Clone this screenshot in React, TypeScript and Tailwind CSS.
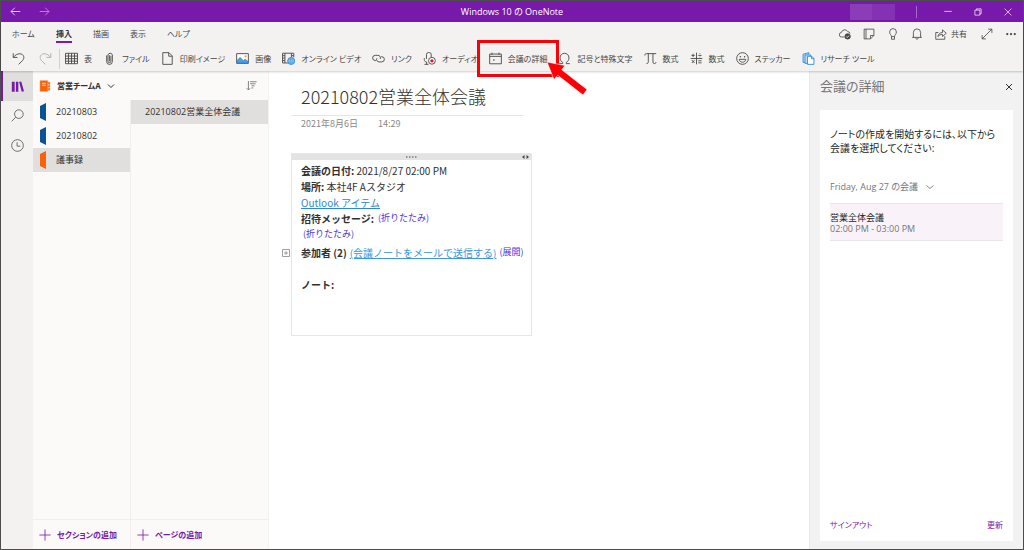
import type { ReactNode } from "react";

type IconProps = { children: ReactNode; className?: string; box?: string };

function Icon({ children, className = "size-[13px]", box = "0 0 16 16" }: IconProps) {
  return (
    <svg
      className={`shrink-0 ${className}`}
      viewBox={box}
      fill="none"
      stroke="currentColor"
      strokeWidth={1.1}
      aria-hidden="true"
    >
      {children}
    </svg>
  );
}

const tabs = ["ホーム", "挿入", "描画", "表示", "ヘルプ"];

const tools: { label: string; icon: ReactNode; highlight?: boolean }[] = [
  {
    label: "表",
    icon: (
      <Icon>
        <path d="M.6 1.6h14.8v12.8H.6zM.6 5h14.8M.6 8.2h14.8M.6 11.3h14.8M4.3 1.6v12.8M8 1.6v12.8M11.7 1.6v12.8" />
      </Icon>
    ),
  },
  {
    label: "ファイル",
    icon: (
      <Icon>
        <path d="M4.5 4.2v7.6a3.5 3.5 0 0 0 7 0V3.6a2.8 2.8 0 0 0-5.4 0v7.8a1.7 1.7 0 0 0 3.6 0V4.6" />
        <path d="M7.9 4v7.5" />
      </Icon>
    ),
  },
  {
    label: "印刷イメージ",
    icon: (
      <Icon>
        <path d="M2.2.8h7.6l4 4v10.4H2.2zM9.5.8v4.4h4.3" />
      </Icon>
    ),
  },
  {
    label: "画像",
    icon: (
      <Icon>
        <path d="M.8 2h14.4v12H.8z" fill="#fff" />
        <path d="M1.3 10.5 5 6.8l4 4 2.3-2 3.4 3v1.7H1.3z" fill="#4ba0e1" stroke="#2b7cd3" strokeWidth="1" />
        <circle cx="11.8" cy="5.2" r="1.3" fill="#f29b3a" stroke="none" />
      </Icon>
    ),
  },
  {
    label: "オンライン ビデオ",
    icon: (
      <Icon>
        <path d="M7.5 13.5H.7v-12h13.8v5M3.6 1.5v12M11.6 1.5v5M.7 4.5h2.9M.7 7.5h2.9M.7 10.5h2.9M11.6 4.5h2.9" />
        <circle cx="11.3" cy="11" r="4.3" fill="#4ba0e1" stroke="#2b88d8" />
        <path d="M7.2 11h8.2M11.3 7v8M9.4 7.8c-.9 2-.9 4.4 0 6.4M13.2 7.8c.9 2 .9 4.4 0 6.4" stroke="#b8dcf7" strokeWidth=".6" />
      </Icon>
    ),
  },
  {
    label: "リンク",
    icon: (
      <Icon>
        <path d="M5.2 10.5H4a3.2 3.2 0 0 1 0-6.400h3.200a3.200 3.200 0 0 1 2.900 4.500" />
        <path d="M10.800 5.800H12a3.200 3.200 0 0 1 0 6.400H8.800a3.200 3.200 0 0 1-2.900-4.500" />
      </Icon>
    ),
  },
  {
    label: "オーディオ",
    icon: (
      <Icon>
        <path d="M4.300 8.500V3a2.300 2.300 0 0 1 2.300-2.300h1.200A2.300 2.300 0 0 1 10.100 3v3.200M1.600 7.500v1.800c0 1.800 1.200 3 3 3.200M4.500 12.400v2.700M1.800 15.200h5" />
        <circle cx="11" cy="10.800" r="4.200" fill="#fff" />
        <circle cx="11" cy="10.800" r="2" fill="#e81123" stroke="none" />
      </Icon>
    ),
  },
  {
    label: "会議の詳細",
    highlight: true,
    icon: (
      <Icon>
        <path d="M.8 2.500h14.400v12H.8zM.8 5.400h14.400M3.700.8v2.800M12.300.8v2.800" />
        <circle cx="6" cy="9.800" r="1" fill="currentColor" stroke="none" />
      </Icon>
    ),
  },
  {
    label: "記号と特殊文字",
    icon: (
      <Icon>
        <path d="M1.500 14.300h4.300v-1.500C3.800 11.600 2.500 9.700 2.500 7.200 2.500 3.900 4.900 1.600 8 1.600s5.500 2.300 5.500 5.600c0 2.500-1.300 4.400-3.300 5.600v1.500h4.300" />
      </Icon>
    ),
  },
  {
    label: "数式",
    icon: (
      <Icon>
        <path d="M1 4.300c0-1.500.6-2.300 2-2.300h12M5.300 2v10c0 1.500-.8 2.300-2.300 2.300M11 2v10.500c0 1.200.7 1.800 1.800 1.800s1.900-.6 1.900-1.800" />
      </Icon>
    ),
  },
  {
    label: "数式",
    icon: (
      <Icon>
        <path d="M8 .8v14.400M.8 8h14.400M1.800 4.200h4M3.800 2.200v4M10.200 4.200h4M2.300 10l3.200 3.500M5.500 10l-3.200 3.500M10.200 10.800h4M10.200 13.300h4M12.200 1.700v.8M12.200 5.800v.8" />
      </Icon>
    ),
  },
  {
    label: "ステッカー",
    icon: (
      <Icon>
        <circle cx="8" cy="8" r="7.2" />
        <path d="M4 9h8c-.3 2.300-1.800 3.500-4 3.500S4.300 11.300 4 9z" />
        <circle cx="5.4" cy="5.8" r=".9" fill="currentColor" stroke="none" />
        <circle cx="10.6" cy="5.8" r=".9" fill="currentColor" stroke="none" />
      </Icon>
    ),
  },
  {
    label: "リサーチ ツール",
    icon: (
      <Icon>
        <g stroke="#2b88d8">
          <path d="M5 12.800H1.300V2.800L8.500.8v1.800" fill="#c7e0f4" />
          <path d="M6.800 14H3.700V3.600h7v1.600" fill="#c7e0f4" />
          <path d="M6.700 5.300h5.300l2.700 2.700v7.200h-8z" fill="#fff" />
          <path d="M11.800 5.300v2.900h2.900" />
        </g>
      </Icon>
    ),
  },
];

const sections = [
  { name: "20210803", color: "text-[#0b5394]", selected: false },
  { name: "20210802", color: "text-[#0b5394]", selected: false },
  { name: "議事録", color: "text-[#f7630c]", selected: true },
];

function TitleBar() {
  return (
    <header className="grid h-[21px] grid-cols-3 items-center bg-[#7719aa] text-white">
      <div className="flex items-center gap-[18px] pl-[9px]">
        <button type="button" aria-label="戻る">
          <Icon className="size-[11px]"><path d="M15 8H1.500M7 2.500 1.500 8 7 13.500" /></Icon>
        </button>
        <button type="button" aria-label="進む" className="opacity-60">
          <Icon className="size-[11px]"><path d="M1 8h13.500M9 2.500 14.500 8 9 13.500" /></Icon>
        </button>
      </div>
      <h1 className="text-center text-[9px]">Windows 10 の OneNote</h1>
      <div className="flex items-center justify-end">
        <div className="mr-[21px] flex h-4 w-[45px]">
          <span className="flex-1 bg-[#8b3db8]" />
          <span className="flex-1 bg-[#8431b3]" />
        </div>
        <span className="mr-[26px] h-3 w-px bg-[#a56bc6]" />
        <div className="flex items-center gap-5 pr-2.5">
          <button type="button" aria-label="最小化">
            <Icon className="size-2.5"><path d="M2 7h12" /></Icon>
          </button>
          <button type="button" aria-label="元のサイズに戻す">
            <Icon className="size-2.5"><path d="M3 5h8v8H3zM5.500 5V3H13v8h-2" /></Icon>
          </button>
          <button type="button" aria-label="閉じる">
            <Icon className="size-2.5"><path d="m2.500 2.500 11 11M13.500 2.500l-11 11" /></Icon>
          </button>
        </div>
      </div>
    </header>
  );
}

function Ribbon() {
  return (
    <div className="relative z-10 bg-[#f3f2f1] shadow-[0_1px_2px_rgba(0,0,0,0.2)]">
      <div className="flex h-6 items-center justify-between pr-1.5 pl-[11px]">
        <nav className="flex gap-[21px] text-[8px]">
          {tabs.map((tab) => (
            <a
              key={tab}
              href="#"
              className={
                tab === "挿入"
                  ? "border-b-2 border-[#7719aa] pt-0.5 leading-[14px] font-bold text-[#3b3a39]"
                  : "border-b-2 border-transparent pt-0.5 leading-[14px]"
              }
            >
              {tab}
            </a>
          ))}
        </nav>
        <div className="flex items-center gap-3">
          <button type="button" aria-label="同期">
            <Icon className="size-3">
              <path d="M7.500 12H3.600a3 3 0 0 1-.4-6A4.500 4.500 0 0 1 11.500 4.700a3 3 0 0 1 3 2.800" />
              <circle cx="11.500" cy="11.200" r="3.600" fill="#484644" />
              <path d="m9.800 11.300 1.300 1.300 2.200-2.500" stroke="#fff" />
            </Icon>
          </button>
          <button type="button" aria-label="付箋">
            <Icon className="size-3"><path d="M1.500 1.500h13v8.500l-4.500 4.500H1.500zM10 14.500V10h4.500M4 1.500v13" /></Icon>
          </button>
          <button type="button" aria-label="ヒント">
            <Icon className="size-3"><path d="M6 11.500C6 9.500 3.500 8.500 3.500 5.300a4.500 4.500 0 0 1 9 0c0 3.200-2.500 4.200-2.500 6.200zM6 11.500V15h4v-3.500" /></Icon>
          </button>
          <button type="button" aria-label="通知">
            <Icon className="size-3"><path d="M1.500 12.500h13M3.200 12.500V6a4.800 4.800 0 0 1 9.600 0v6.500M6.300 13c.2 1.400.8 2 1.700 2s1.500-.6 1.700-2" /></Icon>
          </button>
          <button type="button" className="flex items-center gap-1 text-[8px]">
            <Icon className="size-3"><path d="M4.500 6H1v9h12v-4M4 11.500c.5-3.800 2.800-5.500 6-5.500V2.500L15 7l-5 4.300V8.500c-2.800 0-4.500.8-6 3z" /></Icon>
            共有
          </button>
          <button type="button" aria-label="全画面表示" className="pl-0.5">
            <Icon className="size-3"><path d="M1.500 14.500l13-13M9.500 1.500h5v5M1.500 9.500v5h5" /></Icon>
          </button>
          <button type="button" aria-label="その他">
            <Icon className="size-3">
              <g fill="currentColor" stroke="none">
                <circle cx="3" cy="8" r="1.500" />
                <circle cx="8" cy="8" r="1.500" />
                <circle cx="13" cy="8" r="1.500" />
              </g>
            </Icon>
          </button>
        </div>
      </div>
      <div className="flex h-[25px] items-center pl-[11px]">
        <button type="button" aria-label="元に戻す">
          <Icon><path d="M1.500 1.500v5.200h5.200M1.700 6.500C4 3.500 7 2 10 2.200c4.500.3 6 5 3 8.300L8.200 15.200" /></Icon>
        </button>
        <button type="button" aria-label="やり直し" className="ml-3.5 opacity-40">
          <Icon><path d="M14.500 1.500v5.200H9.300M14.300 6.500C12 3.500 9 2 6 2.200 1.500 2.500 0 7.200 3 10.500l4.800 4.700" /></Icon>
        </button>
        <span className="mr-[5px] ml-[7px] h-5 w-px bg-[#d2d0ce]" />
        <div className="flex items-center gap-[11px] text-[8px]">
          {tools.map((tool, i) => (
            <button key={i} type="button" className="relative flex items-center gap-1.5 whitespace-nowrap">
              {tool.icon}
              {tool.label}
              {tool.highlight && <Callout />}
            </button>
          ))}
        </div>
      </div>
    </div>
  );
}

/* red frame and arrow pointing at the meeting details button */
function Callout() {
  return (
    <span className="pointer-events-none absolute -inset-x-3 -inset-y-3">
      <span className="absolute inset-0 border-[3px] border-[#fb0007]" />
      <svg className="absolute top-5 right-[-30px] h-9 w-11" viewBox="0 0 44 36" aria-hidden="true">
        <path d="M2 2 20 5.500 16.700 9.700 42 29.500 38 35 12.800 15.300 9 19.500z" fill="#fb0007" stroke="#fff" strokeWidth=".6" />
      </svg>
    </span>
  );
}

function Rail() {
  return (
    <nav className="flex w-8 shrink-0 flex-col items-center bg-[#f3f2f1] text-[#605e5c]">
      <button
        type="button"
        aria-label="ノートブック"
        className="flex h-[30px] w-full items-center justify-center border-l-2 border-[#7719aa] bg-[#e1dfdd] pr-0.5 text-[#7719aa]"
      >
        <Icon className="size-[13px]">
          <path d="M1 2h3.500v12.500H1zM6 2h3v12.500H6zM10 2.500l2.600-.8 3.400 12-2.800.9z" fill="currentColor" stroke="none" />
        </Icon>
      </button>
      <button type="button" aria-label="検索" className="flex h-[29px] items-center">
        <Icon><circle cx="9.700" cy="6.300" r="5.300" /><path d="M5.900 10.100.9 15.100" /></Icon>
      </button>
      <button type="button" aria-label="最近使ったノート" className="flex h-[30px] items-center">
        <Icon><circle cx="8" cy="8" r="7.200" /><path d="M7.500 4v4.800h4" /></Icon>
      </button>
    </nav>
  );
}

function AddButton({ children }: { children: ReactNode }) {
  return (
    <button
      type="button"
      className="mt-auto flex h-[30px] items-center gap-1.5 border-t border-[#f0efed] pl-1.5 text-[8px] font-bold text-[#7719aa]"
    >
      <Icon className="size-3"><path d="M8 .5v15M.5 8h15" /></Icon>
      {children}
    </button>
  );
}

function Notebook() {
  return (
    <aside className="flex w-[236px] shrink-0 flex-col border-r border-[#f3f2f1] bg-[#fbfaf8] text-[#323130]">
      <div className="flex h-[29px] items-center justify-between pr-[11px] pl-1.5">
        <button type="button" className="flex items-center gap-1.5 text-[8px] font-bold">
          <Icon className="size-3">
            <path d="M1.500 1h10v14h-10zM12.500 3h2v2.500h-2zM12.500 7h2v2.500h-2zM12.500 11h2v2.500h-2z" fill="#f7630c" stroke="#f7630c" strokeWidth=".6" />
            <path d="M4 4.500h5M4 7h5" stroke="#fff" />
          </Icon>
          営業チームA
          <Icon className="size-2"><path d="m2 5 6 6 6-6" strokeWidth="2" /></Icon>
        </button>
        <button type="button" aria-label="並べ替え" className="text-[#605e5c]">
          <Icon className="size-[11px]"><path d="M3.500 1.500v13M1 12l2.500 2.500L6 12M6 2.500h9.500M6 5.500h8M8 8.500h4.500M8 11.500h2.500" /></Icon>
        </button>
      </div>
      <div className="flex flex-1">
        <div className="flex w-[98px] flex-col border-r border-[#f0efed]">
          <ul>
            {sections.map((s) => (
              <li key={s.name}>
                <button
                  type="button"
                  className={`flex h-6 w-full items-center gap-2.5 pl-[7px] ${s.selected ? "bg-[#e1dfdd]" : ""}`}
                >
                  <Icon className={`h-[18px] w-1.5 ${s.color}`} box="0 0 6 18">
                    <path d="M6 0v18L0 15V3z" fill="currentColor" stroke="none" />
                  </Icon>
                  {s.name}
                </button>
              </li>
            ))}
          </ul>
          <AddButton>セクションの追加</AddButton>
        </div>
        <div className="flex flex-1 flex-col">
          <button type="button" className="flex h-6 items-center bg-[#e1dfdd] pl-3.5">
            20210802営業全体会議
          </button>
          <AddButton>ページの追加</AddButton>
        </div>
      </div>
    </aside>
  );
}

function NotePage() {
  return (
    <main className="min-w-0 flex-1 bg-white pt-3 pl-[22px] font-['Noto_Sans_CJK_JP',sans-serif] text-[#323130]">
      <div className="w-[232px]">
        <h2 className="border-b border-[#e6e6e6] pb-1.5 pl-2.5 text-[18px] leading-[26px] font-light whitespace-nowrap">
          20210802営業全体会議
        </h2>
        <p className="flex gap-5 pl-2.5 text-[9px] leading-4 text-[#8a8886]">
          <span>2021年8月6日</span>
          <span>14:29</span>
        </p>
      </div>
      <div className="relative mt-[21px] w-[241px] border border-[#e6e6e6]">
        <div className="relative flex h-[6px] items-center justify-center bg-[#e3e3e3] text-[#444]">
          <svg className="h-0.5 w-[11px]" viewBox="0 0 11 2" fill="currentColor" aria-hidden="true">
            <path d="M0 .5h1.500v1H0zM3 .5h1.500v1H3zM6 .5h1.500v1H6zM9 .5h1.500v1H9z" />
          </svg>
          <svg className="absolute right-0.5 h-1 w-[7px]" viewBox="0 0 7 4" fill="currentColor" aria-hidden="true">
            <path d="M2.500 0v4L0 2zM4.500 0v4L7 2z" />
          </svg>
        </div>
        <div className="h-[175px] px-[9px] pt-[3px] text-[10px] leading-4 whitespace-nowrap [font-feature-settings:normal]">
          <p><b>会議の日付:</b> 2021/8/27 02:00 PM</p>
          <p><b>場所:</b> 本社4F Aスタジオ</p>
          <p><a href="#" className="text-[#2b88d8] underline">Outlook アイテム</a></p>
          <p className="flex gap-1">
            <b>招待メッセージ:</b>
            <button type="button" className="pb-0.5 text-[9px] leading-[14px] text-[#4a32e6]">(折りたたみ)</button>
          </p>
          <p className="flex">
            <button type="button" className="ml-0.5 pb-0.5 text-[9px] leading-[14px] text-[#4a32e6]">(折りたたみ)</button>
          </p>
          <p className="mt-0.5 flex gap-[3px]">
            <b>参加者 (2)</b>
            <a href="#" className="text-[#3a96dd] underline">(会議ノートをメールで送信する)</a>
            <button type="button" className="pb-0.5 text-[9px] leading-[14px] text-[#4a32e6]">(展開)</button>
          </p>
          <p className="mt-4"><b>ノート:</b></p>
        </div>
        <button type="button" aria-label="展開" className="absolute top-[95px] -left-2.5 text-[#8a8886]">
          <Icon className="size-2"><path d="M1 1h14v14H1zM8 4v8M4 8h8" strokeWidth="1.600" /></Icon>
        </button>
      </div>
    </main>
  );
}

function MeetingPane() {
  return (
    <aside className="flex w-[214px] shrink-0 flex-col border-l border-[#e8e8e8] bg-[#f2f2f2] px-2.5 pb-2">
      <div className="flex h-[39px] items-center justify-between pb-2">
        <h2 className="text-[13px] text-[#767676]">会議の詳細</h2>
        <button type="button" aria-label="閉じる" className="text-[#323130]">
          <Icon className="size-2"><path d="m2 2 12 12M14 2 2 14" strokeWidth="2" /></Icon>
        </button>
      </div>
      <div className="flex flex-1 flex-col bg-white px-2.5 pb-2.5">
        <p className="mt-[17px] text-[10px] leading-[14px] text-[#201f1e]">
          ノートの作成を開始するには、以下から
          <br />
          会議を選択してください:
        </p>
        <button type="button" className="mt-6 flex items-center gap-2 leading-4 text-[#767676]">
          Friday, Aug 27 の会議
          <Icon className="size-2"><path d="m1 5 7 6 7-6" strokeWidth="1.800" /></Icon>
        </button>
        <button
          type="button"
          className="mt-2 border-y border-[#e8e6e8] bg-[#f9f3f9] pt-2 pb-1.5 text-left leading-[11px] text-[#201f1e]"
        >
          営業全体会議
          <span className="block text-[#767676]">02:00 PM - 03:00 PM</span>
        </button>
        <div className="mt-auto flex justify-between text-[8px] text-[#7719aa]">
          <a href="#">サインアウト</a>
          <a href="#">更新</a>
        </div>
      </div>
    </aside>
  );
}

export default function App() {
  return (
    <div
      lang="ja"
      className="flex min-h-screen flex-col border border-[#4d4d4d] font-['Open_Sans','Noto_Sans_CJK_JP',sans-serif] text-[9px] text-[#484644] [font-feature-settings:'palt']"
    >
      <TitleBar />
      <Ribbon />
      <div className="flex flex-1">
        <Rail />
        <Notebook />
        <NotePage />
        <MeetingPane />
      </div>
    </div>
  );
}
